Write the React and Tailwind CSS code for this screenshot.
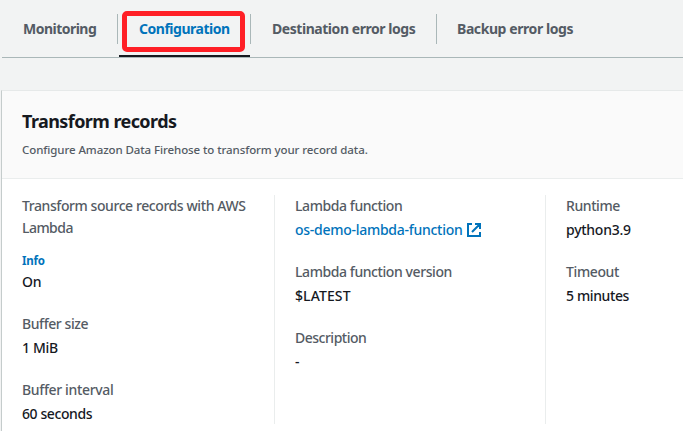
function Tab({ children, className, active }) {
  return (
    <button className={`relative flex h-[58px] shrink-0 items-center whitespace-nowrap pb-px text-[14px] font-bold leading-[22px] ${active ? "text-[#0073bb]" : "text-[#545b64]"} ${className}`}>
      {children}
    </button>
  );
}

function Separator() {
  return <span className="mt-[14px] h-[30px] w-px shrink-0 bg-[#aab7b8]" />;
}

function Field({ label, children, className = "tracking-[-0.2px]", labelClass = "tracking-[-0.3px]" }) {
  return (
    <div className="flex flex-col gap-[2px]">
      <div className={`whitespace-nowrap text-[#545b64] ${labelClass}`}>{label}</div>
      <div className={`whitespace-nowrap text-[#16191f] ${className}`}>{children}</div>
    </div>
  );
}

function ExternalIcon() {
  return (
    <svg width="14" height="14" viewBox="0 0 14 14" fill="none" stroke="currentColor" strokeWidth="2" className="shrink-0">
      <path d="M5 1H1v12h12V9M8 1h5v5M13 1 5 9" />
    </svg>
  );
}

export default function App() {
  return (
    <div className="flex h-[431px] w-[683px] flex-col overflow-hidden bg-[#f2f3f3] pl-px font-['Noto_Sans',sans-serif] text-[14px] font-medium leading-[22px]">
      <nav className="ml-px flex h-[58px] shrink-0 border-b border-[#aab7b8]">
        <Tab className="w-[115px] pl-[21px] tracking-[-0.52px]">Monitoring</Tab>
        <Separator />
        <Tab active className="w-[132px] pl-[21px] tracking-[-0.48px]">
          Configuration
          <span className="absolute bottom-[1px] left-[1px] h-[2px] w-[131px] bg-[#16191f]" />
          <span className="absolute left-[4px] top-[11px] h-[41px] w-[123px] rounded-[5px] border-[5px] border-[#ff1f26]" />
        </Tab>
        <Separator />
        <Tab className="w-[185px] pl-[21px] tracking-[-0.45px]">Destination error logs</Tab>
        <Separator />
        <Tab className="pl-[20px] tracking-[-0.42px]">Backup error logs</Tab>
      </nav>
      <section className="mt-[32px] flex flex-1 flex-col border-l border-t border-l-[#c5cccc] border-t-[#e6e9e9] bg-white">
        <header className="h-[88px] shrink-0 border-b border-[#eaeded] bg-[#fafafa] pl-5 pt-[19px]">
          <h2 className="text-[18px] font-bold leading-[22px] tracking-[-0.58px] text-[#16191f]">Transform records</h2>
          <p className="mt-[9px] text-[11.5px] leading-[18px] tracking-[-0.09px] text-[#545b64]">Configure Amazon Data Firehose to transform your record data.</p>
        </header>
        <div className="mt-[16px] flex h-[229px]">
          <div className="flex w-[273px] shrink-0 flex-col border-r border-[#eaeded] pl-5">
            <div className="text-[#545b64]">
              <div className="whitespace-nowrap tracking-[-0.42px]">Transform source records with AWS</div>
              <div className="tracking-[-0.54px]">Lambda</div>
            </div>
            <a className="mt-[11px] h-[21px] text-[11.5px] font-bold tracking-[-0.2px] text-[#0073bb]">Info</a>
            <div className="tracking-[-0.3px] text-[#16191f]">On</div>
            <div className="mt-5 flex flex-col gap-5">
              <Field label="Buffer size" labelClass="tracking-[-0.42px]" className="tracking-[-0.35px]">1 MiB</Field>
              <Field label="Buffer interval" labelClass="tracking-[-0.35px]" className="tracking-[-0.4px]">60 seconds</Field>
            </div>
          </div>
          <div className="flex w-[271px] shrink-0 flex-col gap-5 border-r border-[#eaeded] pl-5">
            <Field label="Lambda function" labelClass="tracking-[-0.42px]" className="tracking-[-0.27px]">
              <a className="flex items-center text-[#0073bb]"><span className="mr-1 w-[168px]">os-demo-lambda-function</span><ExternalIcon /></a>
            </Field>
            <Field label="Lambda function version" labelClass="tracking-[-0.42px]" className="tracking-[0.1px]">$LATEST</Field>
            <Field label="Description" labelClass="tracking-[-0.5px]">-</Field>
          </div>
          <div className="flex flex-col gap-5 pl-5">
            <Field label="Runtime" labelClass="tracking-[-0.42px]" className="tracking-[-0.27px]">python3.9</Field>
            <Field label="Timeout" labelClass="tracking-[-0.38px]" className="tracking-[-0.38px]">5 minutes</Field>
          </div>
        </div>
      </section>
    </div>
  );
}
